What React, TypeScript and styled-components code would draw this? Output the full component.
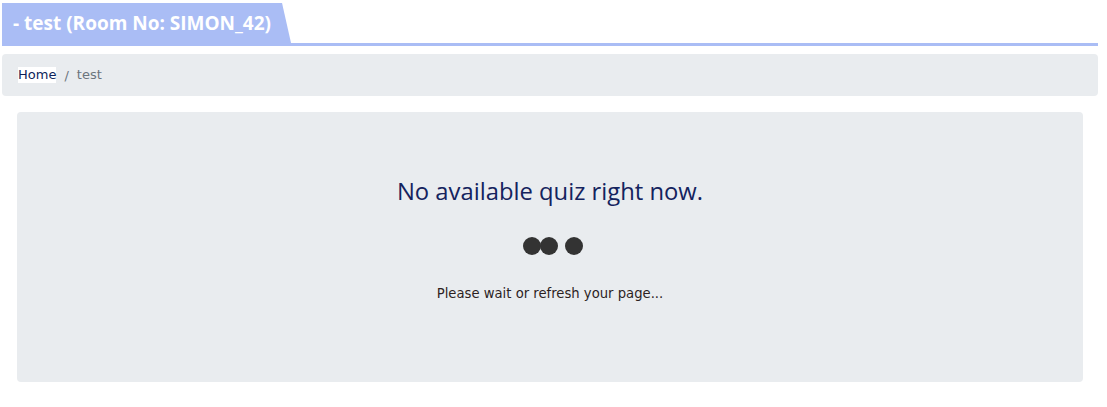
import React from "react";
import styled, { createGlobalStyle } from "styled-components";

const Global = createGlobalStyle`
  html, body { margin: 0; padding: 0; background: #fff; }
  body { font-family: "DejaVu Sans", Verdana, sans-serif; }
`;

const Page = styled.div`
  padding: 3px 9px 0 2px;
  display: flex;
  flex-direction: column;
`;

const TabBar = styled.div`
  display: flex;
  border-bottom: 3px solid #aabdf5;
`;

const Tab = styled.div`
  background: #aabdf5;
  color: #fff;
  font-family: "Open Sans", "Noto Sans", sans-serif;
  font-weight: 700;
  font-size: 19px;
  height: 40px;
  display: flex;
  align-items: center;
  padding: 0 20px 0 11px;
  clip-path: polygon(0 0, calc(100% - 9px) 0, 100% 100%, 0 100%);
`;

const Breadcrumb = styled.nav`
  margin-top: 8px;
  background: #e9ecef;
  border-radius: 4px;
  height: 42px;
  padding: 0 16px;
  display: flex;
  align-items: center;
  font-size: 13px;
`;

const Crumb = styled.span<{ $active?: boolean }>`
  color: ${(p) => (p.$active ? "#6c757d" : "#0d1f5a")};
  background: ${(p) => (p.$active ? "transparent" : "#fff")};
  line-height: 16px;
`;

const Sep = styled.span`
  color: #6c757d;
  padding: 0 8px;
`;

const Panel = styled.section`
  margin: 16px 15px 0;
  height: 270px;
  box-sizing: border-box;
  background: #e9ecef;
  border-radius: 4px;
  display: flex;
  flex-direction: column;
  align-items: center;
  padding-top: 63px;
`;

const Heading = styled.h2`
  margin: 0;
  font-family: "Open Sans", "Noto Sans", sans-serif;
  font-weight: 500;
  font-size: 23.8px;
  line-height: 32px;
  color: #14235e;
`;

const Dots = styled.div`
  margin: 30px 0 0 6px;
  display: flex;
  height: 18px;
`;

const Dot = styled.span<{ $gap: number }>`
  width: 18px;
  height: 18px;
  border-radius: 50%;
  background: #333;
  margin-left: ${(p) => p.$gap}px;
`;

const Note = styled.p`
  margin: 31px 0 0;
  font-size: 13.2px;
  color: #2d1f1f;
  line-height: 16px;
`;

export default function App() {
  return (
    <>
      <Global />
      <Page>
        <TabBar>
          <Tab>- test (Room No: SIMON_42)</Tab>
        </TabBar>
        <Breadcrumb>
          <Crumb>Home</Crumb>
          <Sep>/</Sep>
          <Crumb $active>test</Crumb>
        </Breadcrumb>
        <Panel>
          <Heading>No available quiz right now.</Heading>
          <Dots>
            <Dot $gap={0} />
            <Dot $gap={-1} />
            <Dot $gap={7} />
          </Dots>
          <Note>Please wait or refresh your page...</Note>
        </Panel>
      </Page>
    </>
  );
}
